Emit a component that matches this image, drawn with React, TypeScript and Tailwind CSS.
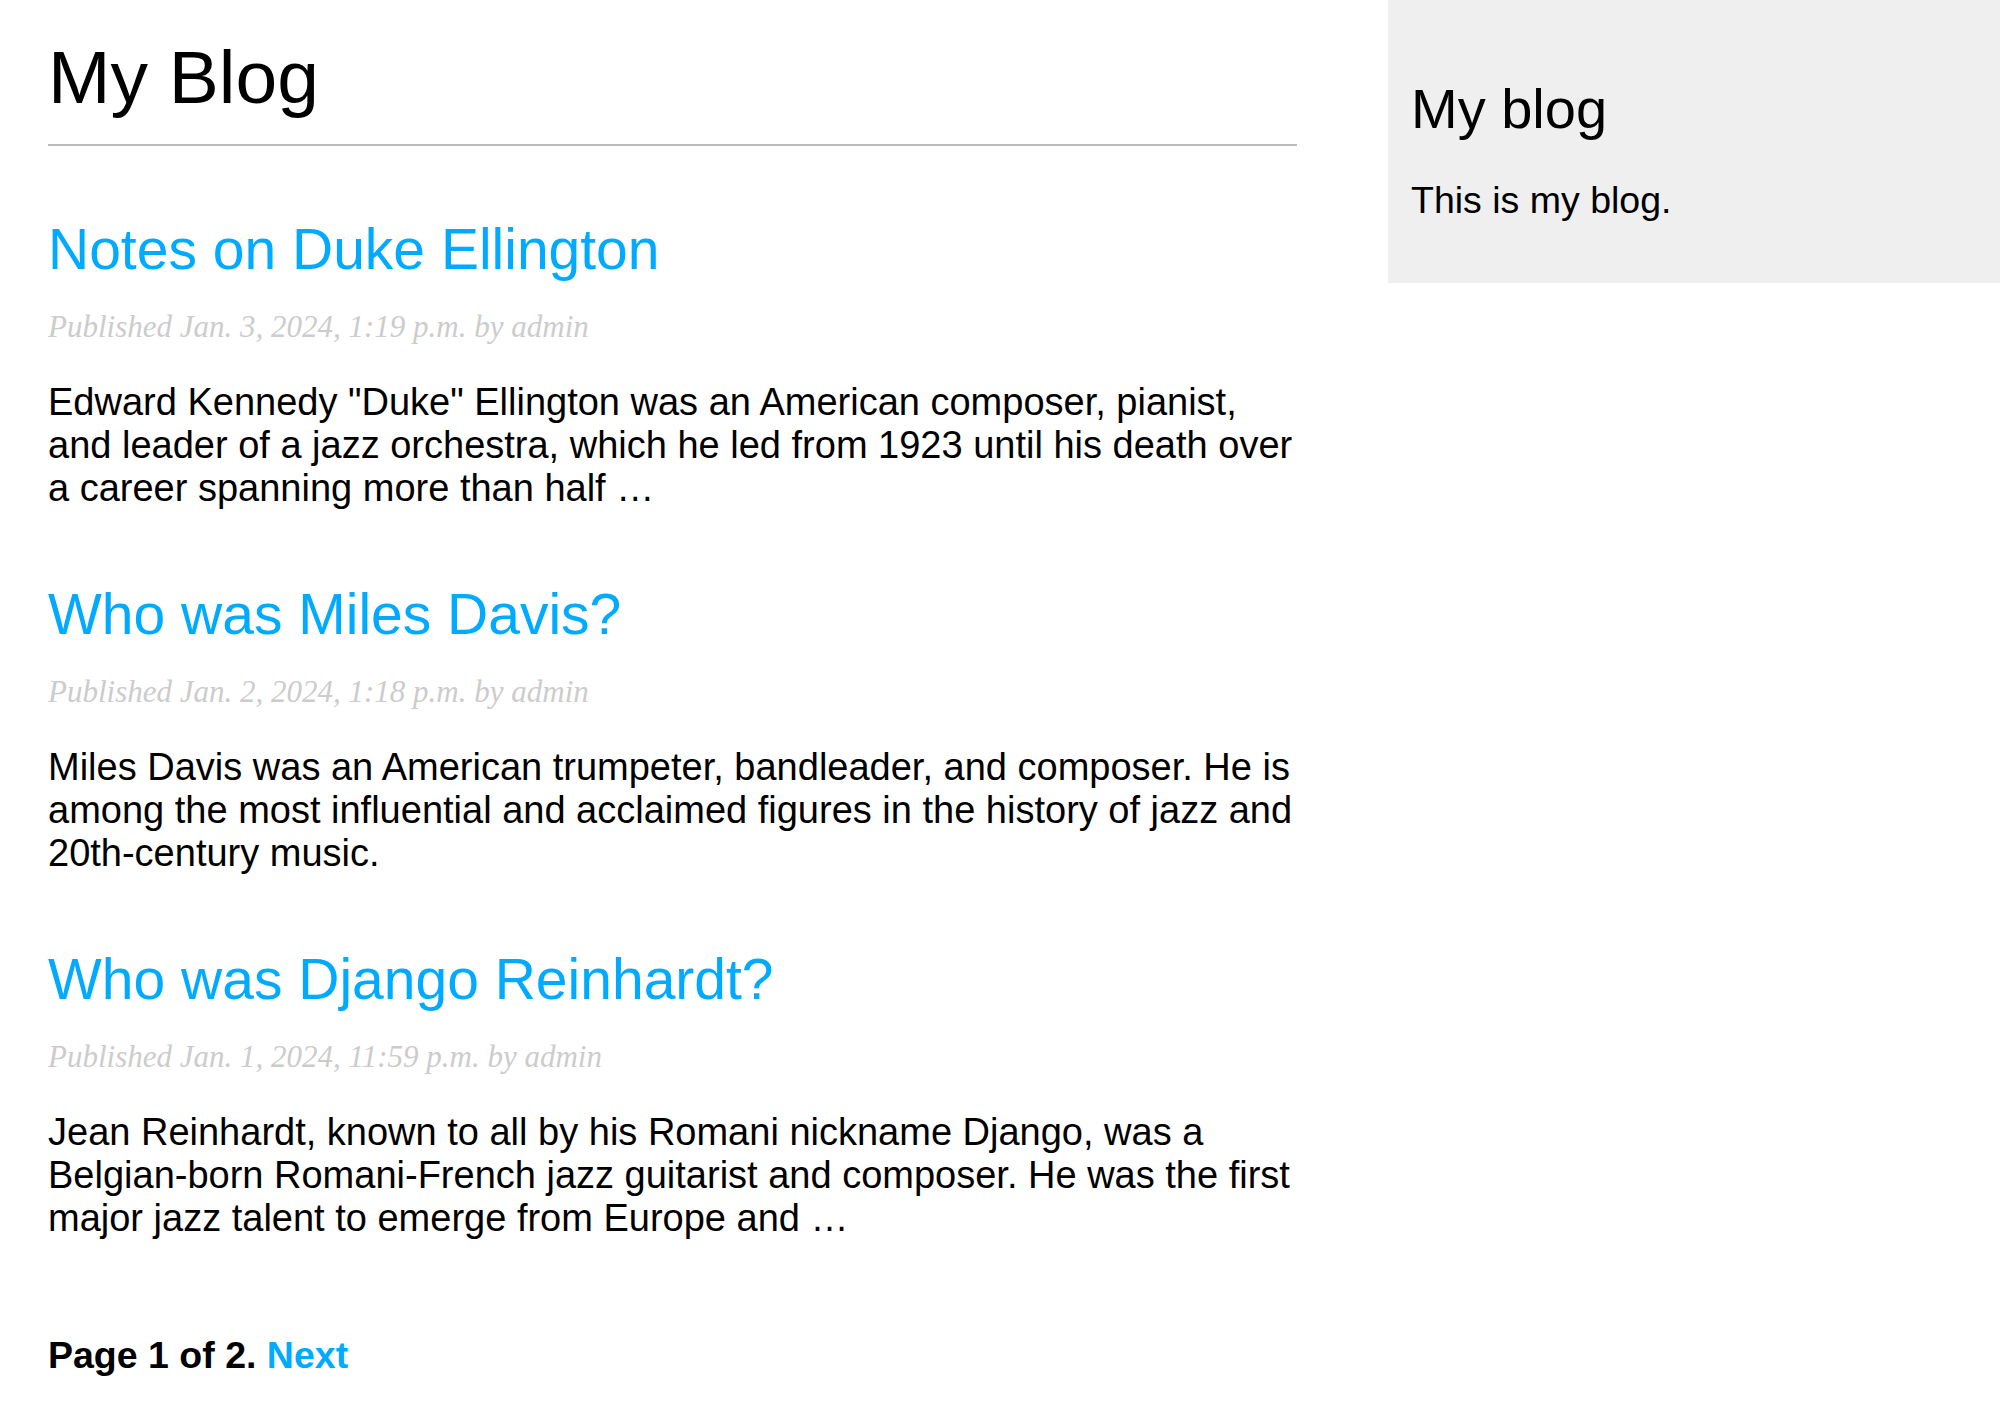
const posts = [
  {
    title: "Notes on Duke Ellington",
    date: "Jan. 3, 2024, 1:19 p.m.",
    body: 'Edward Kennedy "Duke" Ellington was an American composer, pianist, and leader of a jazz orchestra, which he led from 1923 until his death over a career spanning more than half …',
  },
  {
    title: "Who was Miles Davis?",
    date: "Jan. 2, 2024, 1:18 p.m.",
    body: "Miles Davis was an American trumpeter, bandleader, and composer. He is among the most influential and acclaimed figures in the history of jazz and 20th-century music.",
  },
  {
    title: "Who was Django Reinhardt?",
    date: "Jan. 1, 2024, 11:59 p.m.",
    body: "Jean Reinhardt, known to all by his Romani nickname Django, was a Belgian-born Romani-French jazz guitarist and composer. He was the first major jazz talent to emerge from Europe and …",
  },
];

const Post = ({ title, date, body }: { title: string; date: string; body: string }) => (
  <div className="mb-[72px]">
    <h2 className="text-[57px] leading-[64px] font-normal">
      <a href="#" className="text-[#00abff] no-underline">
        {title}
      </a>
    </h2>
    <p className="mt-[29px] text-[31px] leading-[34px] italic text-[#cccccc] font-['Liberation_Serif',serif]">
      Published {date} by admin
    </p>
    <p className="mt-[37px] text-[38px] leading-[43px]">{body}</p>
  </div>
);

export default function App() {
  return (
    <div className="flex w-[2000px] min-h-[1405px] bg-white text-black font-['Liberation_Sans',Arial,sans-serif]">
      <div className="w-[1297px] pl-[48px]">
        <h1 className="mt-[34px] pb-[24px] border-b-2 border-[#bbbbbb] text-[75px] leading-[86px] font-normal">
          My Blog
        </h1>
        <div className="mt-[71px]">
          {posts.map((p) => (
            <Post key={p.title} {...p} />
          ))}
        </div>
        {/* last post's bottom margin collapses into this one */}
        <div className="mt-[94px] text-[37.5px] leading-[43px] font-bold">
          Page 1 of 2.{" "}
          <a href="#" className="text-[#00abff]">
            Next
          </a>
        </div>
      </div>
      <div className="ml-[91px] w-[612px] self-start bg-[#efefef] px-[23px] pt-[77px] pb-[61px]">
        <h2 className="text-[56px] leading-[64px] font-normal">My blog</h2>
        <p className="mt-[38px] text-[37.5px] leading-[43px]">This is my blog.</p>
      </div>
    </div>
  );
}
